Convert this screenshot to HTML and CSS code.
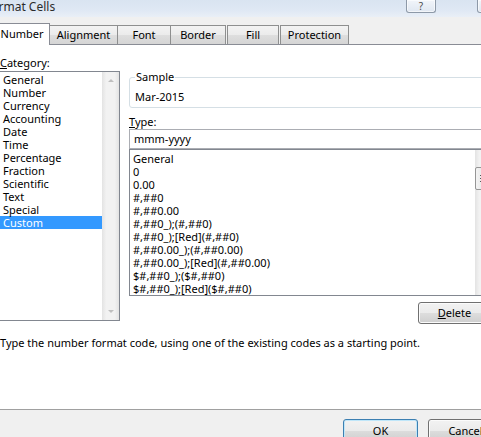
FILE: index.html
```html
<!DOCTYPE html>
<html>
<head>
<meta charset="utf-8">
<title>Format Cells</title>
<link rel="stylesheet" href="styles.css">
</head>
<body>
<div class="window">
  <div class="titlebar">
    <span class="title">Format Cells</span>
    <div class="caption">
      <div class="cap-btn help">?</div>
      <div class="cap-btn close"></div>
    </div>
  </div>
  <div class="tabs">
    <div class="tab active t-number">Number</div>
    <div class="tab t-align">Alignment</div>
    <div class="tab t-font">Font</div>
    <div class="tab t-border">Border</div>
    <div class="tab t-fill">Fill</div>
    <div class="tab t-prot">Protection</div>
  </div>
  <div class="panel">
    <div class="columns">
      <div class="left">
        <div class="label cat-label"><u>C</u>ategory:</div>
        <div class="listbox cat">
          <ul class="items">
            <li>General</li>
            <li>Number</li>
            <li>Currency</li>
            <li>Accounting</li>
            <li>Date</li>
            <li>Time</li>
            <li>Percentage</li>
            <li>Fraction</li>
            <li>Scientific</li>
            <li>Text</li>
            <li>Special</li>
            <li class="selected">Custom</li>
          </ul>
          <div class="vscroll disabled">
            <span class="arr up"></span>
            <span class="track"></span>
            <span class="arr down"></span>
          </div>
        </div>
      </div>
      <div class="right">
        <fieldset class="sample">
          <legend>Sample</legend>
          <div class="sample-val">Mar-2015</div>
        </fieldset>
        <div class="label type-label"><u>T</u>ype:</div>
        <div class="textbox">mmm-yyyy</div>
        <div class="listbox fmt">
          <ul class="items">
            <li>General</li>
            <li>0</li>
            <li>0.00</li>
            <li>#,##0</li>
            <li>#,##0.00</li>
            <li>#,##0_);(#,##0)</li>
            <li>#,##0_);[Red](#,##0)</li>
            <li>#,##0.00_);(#,##0.00)</li>
            <li>#,##0.00_);[Red](#,##0.00)</li>
            <li>$#,##0_);($#,##0)</li>
            <li>$#,##0_);[Red]($#,##0)</li>
          </ul>
          <div class="vscroll">
            <span class="arr up"></span>
            <span class="track"><span class="thumb"><i></i><i></i><i></i></span></span>
            <span class="arr down"></span>
          </div>
        </div>
        <div class="btn-row">
          <button class="btn delete"><u>D</u>elete</button>
        </div>
      </div>
    </div>
    <p class="hint">Type the number format code, using one of the existing codes as a starting point.</p>
  </div>
  <div class="footer">
    <button class="btn default">OK</button>
    <button class="btn">Cancel</button>
  </div>
</div>
</body>
</html>
```
FILE: styles.css
```css
html, body {
  margin: 0;
  padding: 0;
  background: #f0f0f0;
}
body {
  font-family: "Noto Sans", "Open Sans", sans-serif;
  font-size: 11px;
  color: #000;
}
.window {
  width: 481px;
  height: 437px;
  overflow: hidden;
  display: flex;
  flex-direction: column;
  background: #f0f0f0;
}

/* title bar */
.titlebar {
  height: 17px;
  flex: none;
  display: flex;
  align-items: flex-start;
  background: linear-gradient(#d9e4f1 0%, #dfe8f4 60%, #e9eff7 100%);
}
.title {
  margin-left: -15px;
  font-size: 12px;
  line-height: 14px;
  color: #2b2b2b;
  white-space: nowrap;
}
.caption {
  margin-left: auto;
  margin-right: -42px;
  display: flex;
  gap: 41px;
}
.cap-btn {
  height: 13px;
  box-sizing: border-box;
  border: 1px solid #8d99a8;
  border-top: none;
  border-radius: 0 0 3px 3px;
  background: linear-gradient(#f1f5fa, #dfe7f1);
  box-shadow: inset 0 0 0 1px rgba(255,255,255,0.6);
}
.help {
  width: 30px;
  font-size: 10px;
  line-height: 12px;
  text-align: center;
  color: #4a4a4a;
}
.close {
  width: 46px;
}

/* tabs */
.tabs {
  height: 27px;
  flex: none;
  display: flex;
  align-items: flex-end;
  border-bottom: 1px solid #898c95;
  background: #f0f0f0;
}
.tab {
  box-sizing: border-box;
  height: 19px;
  border: 1px solid #8e8f8f;
  border-bottom: none;
  background: linear-gradient(#f3f3f3 0%, #ebebeb 50%, #dedede 51%, #d5d5d5 100%);
  text-align: center;
  line-height: 18px;
  font-size: 11px;
  white-space: nowrap;
}
.tab.active {
  height: 22px;
  margin-bottom: -1px;
  background: #fff;
  border-color: #898c95;
  line-height: 20px;
  position: relative;
  z-index: 1;
}
.t-number { width: 56px; margin-left: -6px; }
.t-align { width: 69px; margin-left: -1px; }
.t-font { width: 54px; margin-left: -1px; }
.t-border { width: 56px; margin-left: -1px; }
.t-fill { width: 52px; margin-left: 1px; }
.t-prot { width: 69px; margin-left: 1px; }

/* panel */
.panel {
  height: 365px;
  flex: none;
  box-sizing: border-box;
  background: #fff;
  border-bottom: 1px solid #a0a0a0;
  padding-top: 10px;
}
.columns {
  display: grid;
  grid-template-columns: 120px 364px;
  column-gap: 9px;
  align-items: start;
}
.label {
  line-height: 16px;
  white-space: nowrap;
}
.listbox {
  box-sizing: border-box;
  border: 1px solid #828790;
  background: #fff;
  display: flex;
  overflow: hidden;
}
.listbox .items {
  list-style: none;
  margin: 0;
  padding: 1px 0 0;
  flex: 1;
  min-width: 0;
}
.listbox li {
  height: 13px;
  line-height: 13px;
  white-space: nowrap;
}
.cat {
  margin-left: -2px;
  width: 122px;
  height: 250px;
}
.cat li {
  padding-left: 4px;
}
.cat li.selected {
  background: #3399ff;
  color: #fff;
}
.fmt {
  height: 147px;
}
.fmt .items {
  padding-top: 2px;
}
.fmt li {
  padding-left: 3px;
}

/* scrollbars */
.vscroll {
  width: 17px;
  flex: none;
  display: flex;
  flex-direction: column;
  background: linear-gradient(90deg, #e3e3e3 0%, #f2f2f2 25%, #f2f2f2 75%, #e3e3e3 100%);
}
.vscroll .arr {
  height: 17px;
  flex: none;
  display: flex;
  align-items: center;
  justify-content: center;
}
.vscroll .arr::before {
  content: "";
  width: 0;
  height: 0;
  border-left: 3px solid transparent;
  border-right: 3px solid transparent;
}
.vscroll .up::before { border-bottom: 3px solid #5c5c5c; }
.vscroll .down::before { border-top: 3px solid #5c5c5c; }
.vscroll.disabled .up::before { border-bottom-color: #bfbfbf; }
.vscroll.disabled .down::before { border-top-color: #bfbfbf; }
.vscroll .track {
  flex: 1;
  display: block;
}
.thumb {
  display: flex;
  flex-direction: column;
  justify-content: center;
  align-items: center;
  gap: 1px;
  box-sizing: border-box;
  height: 23px;
  width: 16px;
  border: 1px solid #959595;
  border-radius: 2px;
  background: linear-gradient(90deg, #f3f3f3 0%, #e8e8e8 50%, #d6d6d6 100%);
}
.thumb i {
  display: block;
  width: 7px;
  height: 1px;
  background: #5a5a5a;
  border-bottom: 1px solid #eee;
}

/* right column */
.right {
  padding-top: 15px;
  min-width: 0;
}
.sample {
  margin: 0;
  padding: 0 4px 3px 5px;
  border: 1px solid #d5dfe5;
  border-radius: 3px;
  min-width: 0;
}
.sample legend {
  margin-left: 0;
  padding: 0 1px;
  line-height: 14px;
}
.sample-val {
  margin-top: 6px;
  line-height: 14px;
}
.type-label {
  margin-top: 6px;
  line-height: 15px;
}
.textbox {
  box-sizing: border-box;
  height: 20px;
  border: 1px solid #abadb3;
  border-right-color: #dbdfe6;
  padding-left: 4px;
  line-height: 18px;
  white-space: nowrap;
}
.btn-row {
  display: flex;
  margin-top: 6px;
}
.btn {
  box-sizing: border-box;
  height: 22px;
  width: 75px;
  padding: 0;
  border: 1px solid #707070;
  border-radius: 3px;
  background: linear-gradient(#f2f2f2 0%, #ebebeb 50%, #dddddd 51%, #cfcfcf 100%);
  box-shadow: inset 0 0 0 1px #fbfbfb;
  font-family: "Noto Sans", "Open Sans", sans-serif;
  font-size: 11px;
  color: #000;
  line-height: 18px;
}
.delete {
  margin-left: 289px;
  width: 73px;
}

.hint {
  margin: 12px 0 0;
  line-height: 14px;
  white-space: nowrap;
}

/* footer */
.footer {
  flex: none;
  display: flex;
  gap: 10px;
  padding-top: 9px;
  padding-left: 343px;
}
.footer .btn {
  height: 23px;
  flex: none;
}
.btn.default {
  border-color: #3c7fb1;
  box-shadow: inset 0 0 0 1px #bfe6f9;
}
```
